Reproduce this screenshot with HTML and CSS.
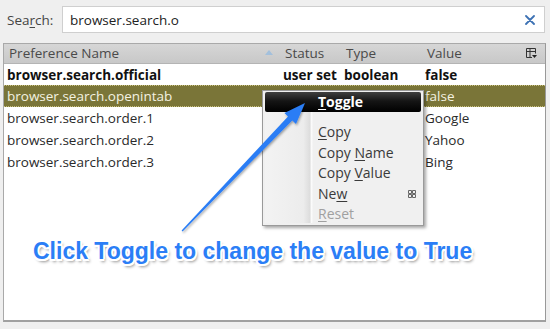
FILE: index.html
```
<!DOCTYPE html>
<html>
<head>
<meta charset="utf-8">
<link rel="stylesheet" href="styles.css">
</head>
<body>
<div class="page">
  <div class="search">
    <span class="search-label">Sea<u>r</u>ch:</span>
    <div class="search-box">
      <span class="search-text">browser.search.o</span>
      <svg class="clear" width="10" height="10" viewBox="0 0 10 10"><path d="M1 1L9 9M9 1L1 9" stroke="#3d72b4" stroke-width="1.8" stroke-linecap="round"/></svg>
    </div>
  </div>
  <div class="tree">
    <div class="head">
      <div class="hcell name">Preference Name<svg class="sort" width="8" height="5" viewBox="0 0 8 5"><path d="M0 5L4 0L8 5Z" fill="#a3c0dc"/></svg></div>
      <div class="hcell">Status</div>
      <div class="hcell">Type</div>
      <div class="hcell">Value</div>
      <div class="hcell picker"><svg width="11" height="11" viewBox="0 0 11 11"><path d="M0.5 0.5H9.5V5.5M0.5 0.5V9.5H6M0.5 3.5H9.5M4 0.5V9.5" fill="none" stroke="#333" stroke-width="1"/><path d="M6 7H11L8.5 10Z" fill="#222"/></svg></div>
    </div>
    <div class="row bold">
      <div class="cell">browser.search.official</div>
      <div class="cell">user set</div>
      <div class="cell">boolean</div>
      <div class="cell">false</div>
    </div>
    <div class="row selected">
      <div class="cell">browser.search.openintab</div>
      <div class="cell"></div>
      <div class="cell"></div>
      <div class="cell">false</div>
    </div>
    <div class="row">
      <div class="cell">browser.search.order.1</div>
      <div class="cell"></div>
      <div class="cell"></div>
      <div class="cell">Google</div>
    </div>
    <div class="row">
      <div class="cell">browser.search.order.2</div>
      <div class="cell"></div>
      <div class="cell"></div>
      <div class="cell">Yahoo</div>
    </div>
    <div class="row">
      <div class="cell">browser.search.order.3</div>
      <div class="cell"></div>
      <div class="cell"></div>
      <div class="cell">Bing</div>
    </div>
  </div>

  <div class="menu">
    <div class="gutter"></div>
    <div class="mitem active"><u>T</u>oggle</div>
    <div class="msep"></div>
    <div class="mitem"><u>C</u>opy</div>
    <div class="mitem">Copy <u>N</u>ame</div>
    <div class="mitem">Copy <u>V</u>alue</div>
    <div class="mitem sub">Ne<u>w</u><svg class="grid" width="8" height="8" viewBox="0 0 8 8"><path d="M0.5 0.5H3.5V3.5H0.5ZM4.5 0.5H7.5V3.5H4.5ZM0.5 4.5H3.5V7.5H0.5ZM4.5 4.5H7.5V7.5H4.5Z" fill="none" stroke="#666" stroke-width="1"/></svg></div>
    <div class="mitem disabled"><u>R</u>eset</div>
  </div>

  <svg class="arrow" width="550" height="329" viewBox="0 0 550 329">
    <defs>
      <filter id="sh" x="-20%" y="-20%" width="140%" height="140%">
        <feDropShadow dx="1" dy="1.5" stdDeviation="1" flood-color="#000" flood-opacity="0.35"/>
      </filter>
    </defs>
    <polygon filter="url(#sh)" fill="#2a7df5" points="305,103 296,124 292.3,120.4 182.6,231.4 181.6,230.6 288,116.4 284.4,113"/>
  </svg>

  <div class="caption">Click Toggle to change the value to True</div>
</div>
</body>
</html>
```
FILE: styles.css
```
* { box-sizing: border-box; }
html, body { margin: 0; padding: 0; }
body {
  background: #efefef;
  font-family: "Open Sans", "Noto Sans", sans-serif;
  font-size: 13.5px;
  color: #222;
}
.page {
  position: relative;
  width: 550px;
  height: 329px;
  overflow: hidden;
}
.search {
  display: flex;
  align-items: center;
  padding: 6px 5px 0 7px;
  height: 33px;
}
.search-label {
  width: 55px;
  color: #444;
}
.search-label u { text-decoration-thickness: 1px; text-underline-offset: 2px; }
.search-box {
  flex: 1;
  height: 27px;
  background: #fff;
  border: 1px solid #cfcfcf;
  display: flex;
  align-items: center;
  padding: 0 9px 0 7px;
}
.search-text { flex: 1; color: #222; }
.clear { display: block; }
.tree {
  margin: 10px 4px 0 3px;
  height: 279px;
  background: #fff;
  border: 1px solid #a9a9a9;
  border-right-color: #999;
  border-bottom: 2px solid #a0a0a0;
}
.head, .row {
  display: grid;
  grid-template-columns: 276px 61px 81px 1fr 24px;
}
.row { grid-template-columns: 276px 61px 81px 1fr; }
.head {
  height: 20px;
  background: linear-gradient(#d6d6d6, #c8c8c8);
  border-bottom: 1px solid #b4b4b4;
  color: #4a4a4a;
  align-items: center;
}
.hcell {
  padding-left: 5px;
  white-space: nowrap;
  line-height: 19px;
}
.hcell.name { position: relative; }
.sort { position: absolute; right: 7px; top: 6px; }
.picker { display: flex; align-items: center; justify-content: center; padding: 0 4px 0 0; }
.picker svg { display: block; }
.row {
  height: 22px;
  align-items: center;
}
.row.bold { height: 21px; }
.cell {
  padding-left: 3px;
  white-space: nowrap;
  color: #2a2a2a;
}
.row.bold .cell { font-weight: 700; color: #111; }
.row.selected {
  background: #7a7538;
  border-top: 1px dotted #c9c07e;
  border-bottom: 1px dotted #c9c07e;
}
.row.selected .cell { color: #f4f2e2; }
.menu {
  position: absolute;
  left: 262px;
  top: 90px;
  width: 162px;
  height: 136px;
  background: #f0f0f0;
  border: 1px solid #9a9a9a;
  box-shadow: 2px 2px 3px rgba(0,0,0,0.35);
  padding: 1px 2px;
  font-size: 14px;
}
.gutter {
  position: absolute;
  left: 2px;
  top: 2px;
  bottom: 2px;
  width: 48px;
  background: linear-gradient(90deg, #f3f3f3 0%, #ececec 80%, #dcdcdc 94%, #fdfdfd 96%, #f2f2f2 100%);
}
.mitem {
  position: relative;
  height: 20.6px;
  line-height: 20.6px;
  padding-left: 53px;
  color: #3a3a3a;
}
.mitem u { text-decoration-thickness: 1px; text-underline-offset: 2px; }
.mitem.active {
  height: 20px;
  line-height: 20px;
  background: linear-gradient(#404040, #151515 45%, #000);
  border-radius: 2px;
  color: #fff;
  font-weight: 700;
}
.msep { height: 10px; }
.mitem.sub { display: flex; align-items: center; }
.grid { position: absolute; right: 5px; top: 6px; }
.mitem.disabled { color: #a0a0a0; }
.arrow {
  position: absolute;
  left: 0;
  top: 0;
  pointer-events: none;
}
.caption {
  position: absolute;
  left: 33px;
  top: 238px;
  font-family: "Liberation Sans", Arial, sans-serif;
  font-weight: 700;
  font-size: 23px;
  color: #2b7ef6;
  white-space: nowrap;
  text-shadow:
    -1.5px -1.5px 0 #fff, 1.5px -1.5px 0 #fff, -1.5px 1.5px 0 #fff, 1.5px 1.5px 0 #fff,
    0 -2px 0 #fff, 0 2px 0 #fff, -2px 0 0 #fff, 2px 0 0 #fff,
    2px 3px 3px rgba(0,0,0,0.45);
}
```
